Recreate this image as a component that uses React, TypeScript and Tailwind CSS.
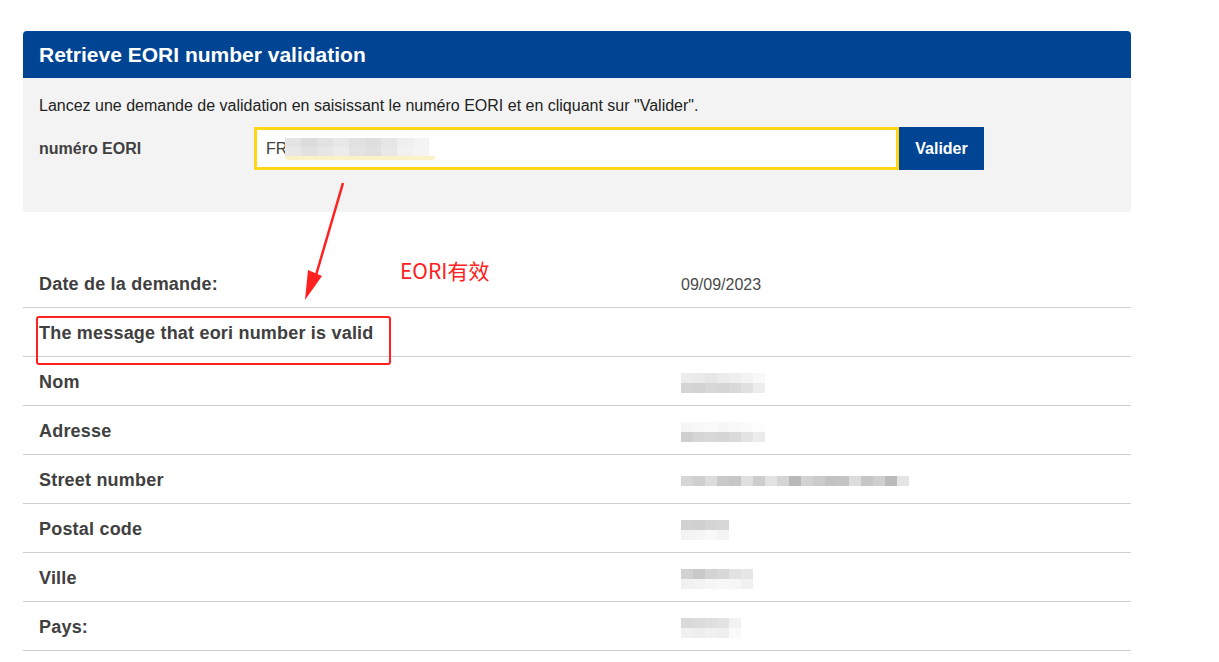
import React from "react";

const FONT = { fontFamily: '"Liberation Sans", Arial, sans-serif' };

// pixelated blur used to hide personal data in the screenshot
function Blur({ cells, rows = 2 }: { cells: string[][]; rows?: number }) {
  return (
    <div className="flex flex-col">
      {cells.slice(0, rows).map((row, i) => (
        <div key={i} className="flex">
          {row.map((c, j) => (
            <span key={j} className="block h-[10px] w-[12px]" style={{ background: c }} />
          ))}
        </div>
      ))}
    </div>
  );
}

const ROWS: { label: string; value?: React.ReactNode }[] = [
  { label: "Date de la demande:", value: <span>09/09/2023</span> },
  { label: "The message that eori number is valid" },
  {
    label: "Nom",
    value: (
      <Blur
        cells={[
          ["#ececec", "#eaeaea", "#e6e6e6", "#ebebeb", "#efefef", "#f3f3f3", "#f8f8f8"],
          ["#d4d4d4", "#d2d2d2", "#d8d8d8", "#d6d6d6", "#d9d9d9", "#e1e1e1", "#ededed"],
        ]}
      />
    ),
  },
  {
    label: "Adresse",
    value: (
      <Blur
        cells={[
          ["#f6f6f6", "#f8f8f8", "#fafafa", "#f7f7f7", "#f9f9f9", "#fbfbfb", "#fdfdfd"],
          ["#cfcfcf", "#d6d6d6", "#d8d8d8", "#d6d6d6", "#dadada", "#e3e3e3", "#ececec"],
        ]}
      />
    ),
  },
  {
    label: "Street number",
    value: (
      <Blur
        cells={[
          ["#d6d6d6", "#cfcfcf", "#dcdcdc", "#cacaca", "#c6c6c6", "#e0e0e0", "#cdcdcd", "#e2e2e2", "#d4d4d4", "#b8b8b8", "#d2d2d2", "#cbcbcb", "#c2c2c2", "#c4c4c4", "#dddddd", "#c6c6c6", "#cfcfcf", "#bbbbbb", "#e4e4e4", "#ffffff"],
        ]}
        rows={1}
      />
    ),
  },
  {
    label: "Postal code",
    value: (
      <Blur
        cells={[
          ["#d2d2d2", "#d0d0d0", "#d5d5d5", "#d7d7d7"],
          ["#f3f3f3", "#f5f5f5", "#f8f8f8", "#f4f4f4"],
        ]}
      />
    ),
  },
  {
    label: "Ville",
    value: (
      <Blur
        cells={[
          ["#d2d2d2", "#c9c9c9", "#d3d3d3", "#d8d8d8", "#e2e2e2", "#e6e6e6"],
          ["#f1f1f1", "#f3f3f3", "#f6f6f6", "#f8f8f8", "#f6f6f6", "#f1f1f1"],
        ]}
      />
    ),
  },
  {
    label: "Pays:",
    value: (
      <Blur
        cells={[
          ["#d9d9d9", "#dcdcdc", "#dfdfdf", "#e3e3e3", "#f2f2f2"],
          ["#f0f0f0", "#eeeeee", "#f1f1f1", "#efefef", "#fafafa"],
        ]}
      />
    ),
  },
];

export default function App() {
  return (
    <div className="relative min-h-[662px] w-[1219px] bg-white text-[#404040]" style={FONT}>
      <div className="w-[1131px] pl-[23px] pt-[31px]">
        {/* search card */}
        <section className="overflow-hidden rounded-[4px] bg-[#f3f3f3]">
          <h1 className="flex h-[47px] items-center bg-[#004494] px-4 text-[21px] font-bold text-white">
            Retrieve EORI number validation
          </h1>
          <div className="px-4 pb-[42px] pt-[18px]">
            <p className="text-[16px] leading-[20px] text-[#222]">
              Lancez une demande de validation en saisissant le numéro EORI et en cliquant sur "Valider".
            </p>
            <div className="mt-[11px] flex items-center">
              <label className="w-[215px] text-[16px] font-bold text-[#404040]">numéro EORI</label>
              <div className="flex h-[43px] w-[645px] items-center border-[3px] border-[#ffd617] bg-white pl-[9px] text-[16px] text-[#404040]">
                <span>FR</span>
                <div className="-ml-[2px] flex flex-col">
                  <div className="flex">
                    {["#e4e4e4", "#dcdcdc", "#e2e2e2", "#e8e8e8", "#e1e1e1", "#dedede", "#e6e6e6", "#efefef", "#f3f3f3"].map((c, i) => (
                      <span key={i} className="block h-[9px] w-[16px]" style={{ background: c }} />
                    ))}
                  </div>
                  <div className="flex">
                    {["#e8e8e8", "#e1e1e1", "#e6e6e6", "#ececec", "#e3e3e3", "#e0e0e0", "#e8e8e8", "#f1f1f1", "#f4f4f4"].map((c, i) => (
                      <span key={i} className="block h-[9px] w-[16px]" style={{ background: c }} />
                    ))}
                  </div>
                  <span className="block h-[4px] w-[150px] rounded-b-full bg-[#fbf1c6]" />
                </div>
              </div>
              <button className="h-[43px] w-[85px] bg-[#004494] text-[16px] font-bold text-white">Valider</button>
            </div>
          </div>
        </section>

        {/* results table */}
        <div className="mt-[47px]">
          {ROWS.map((r) => (
            <div key={r.label} className="grid h-[49px] grid-cols-[642px_1fr] items-center border-b border-[#cfcfcf] px-4 pt-[3px]">
              <span className="text-[18px] font-bold tracking-[0.2px] text-[#404040]">{r.label}</span>
              <div className="text-[16px] text-[#4a4a4a]">{r.value}</div>
            </div>
          ))}
        </div>
      </div>

      {/* annotations */}
      <svg className="pointer-events-none absolute left-0 top-0" width="1219" height="662">
        <line x1="343" y1="183" x2="314" y2="282" stroke="#ff2020" strokeWidth="2.5" />
        <polygon points="305,300 308,270 322,276" fill="#ff2020" />
      </svg>
      <div className="absolute left-[400px] top-[255px] text-[21px] text-[#ff2020]" style={{ fontFamily: '"Noto Sans CJK SC", "Noto Sans", sans-serif' }}>
        EORI有效
      </div>
      <div className="absolute left-[36px] top-[316px] h-[49px] w-[355px] rounded-[3px] border-2 border-[#ff2020]" />
    </div>
  );
}
